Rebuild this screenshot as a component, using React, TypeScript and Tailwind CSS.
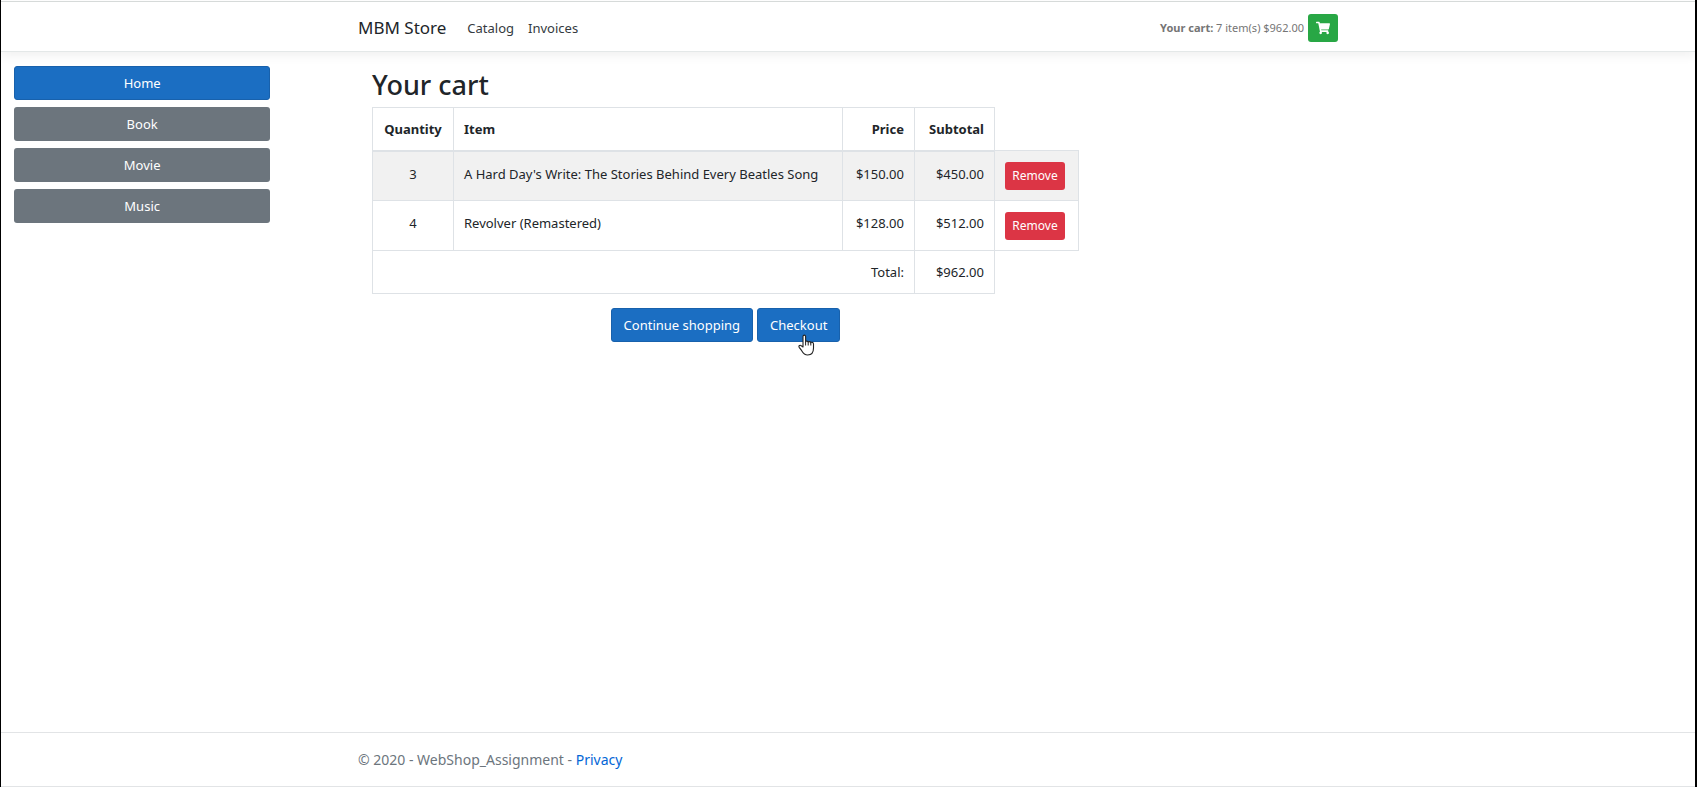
import React from "react";
import { FaShoppingCart } from "react-icons/fa";

const categories = ["Home", "Book", "Movie", "Music"];

const lines = [
  { quantity: 3, item: "A Hard Day's Write: The Stories Behind Every Beatles Song", price: "$150.00", subtotal: "$450.00" },
  { quantity: 4, item: "Revolver (Remastered)", price: "$128.00", subtotal: "$512.00" },
];

const cell = "border border-[#dee2e6] px-[10px]";
const primary = "h-[34px] rounded-[3px] border border-[#1861ac] bg-[#1b6ec2] px-3 text-white";

function Header() {
  return (
    <header className="border-t border-b border-t-[#d6dad9] border-b-[#e4e8e8] bg-white shadow-[0_4px_10px_rgba(0,0,0,0.06)]">
      <nav className="mx-auto flex h-[49px] max-w-[980px] items-center pt-[3px]">
        <a href="#store" className="text-[17px] text-[#212529]">MBM Store</a>
        <a href="#catalog" className="ml-[21px] text-[#343a40]">Catalog</a>
        <a href="#invoices" className="ml-[14px] text-[#343a40]">Invoices</a>
        <p className="ml-auto text-[11px] text-[#757575]">
          <b>Your cart:</b> 7 item(s) $962.00
        </p>
        <button aria-label="Open cart" className="ml-1 flex h-7 w-[30px] items-center justify-center rounded-[3px] bg-[#28a745] text-white">
          <FaShoppingCart size={14} />
        </button>
      </nav>
    </header>
  );
}

function Sidebar() {
  return (
    <aside className="flex w-1/6 shrink-0 flex-col gap-[7px] px-[13px]">
      {categories.map((name, i) => (
        <button
          key={name}
          className={
            i === 0
              ? "h-[34px] rounded-[3px] border border-[#1861ac] bg-[#1b6ec2] text-white"
              : "h-[34px] rounded-[3px] bg-[#6c757d] text-white"
          }
        >
          {name}
        </button>
      ))}
    </aside>
  );
}

function HandPointer() {
  return (
    <svg className="absolute top-[26px] left-[41px] h-[22px] w-[17px]" viewBox="0 0 17 22" aria-hidden="true">
      <path
        d="M5 13V2.5C5 .6 7.6.6 7.6 2.5V8c.1-1.3 2.5-1.2 2.6.3.3-1.1 2.5-.9 2.6.6.4-1 2.7-.8 2.7 1V14c0 4-2 7-5.8 7-3.2 0-4.5-1.6-6-4.3L1.2 13.3C.3 11.7 2.1 10.7 3.3 11.8Z"
        fill="#fff"
        stroke="#222"
        strokeWidth="1.1"
        strokeLinejoin="round"
      />
      <path d="M7.6 8v3.5M10.2 8.3v3.2M12.8 9v2.5" stroke="#222" fill="none" />
    </svg>
  );
}

function CartTable() {
  return (
    <table className="w-[707px] table-fixed border-collapse text-[#212529]">
      <colgroup>
        <col className="w-[81px]" />
        <col />
        <col className="w-[72px]" />
        <col className="w-[80px]" />
        <col className="w-[84px]" />
      </colgroup>
      <thead>
        <tr className="h-[43px]">
          <th className={`${cell} border-b-2 text-center`}>Quantity</th>
          <th className={`${cell} border-b-2 text-left`}>Item</th>
          <th className={`${cell} border-b-2 text-right`}>Price</th>
          <th className={`${cell} border-b-2 text-right`}>Subtotal</th>
          <td />
        </tr>
      </thead>
      <tbody>
        {lines.map((line) => (
          <tr key={line.item} className="h-[50px] align-top odd:bg-[#f1f1f1]">
            <td className={`${cell} pt-[11px] text-center`}>{line.quantity}</td>
            <td className={`${cell} pt-[11px] whitespace-nowrap`}>{line.item}</td>
            <td className={`${cell} pt-[11px] text-right`}>{line.price}</td>
            <td className={`${cell} pt-[11px] text-right`}>{line.subtotal}</td>
            <td className={`${cell} pt-[11px]`}>
              <button className="flex h-7 w-[60px] items-center justify-center rounded-[3px] bg-[#dc3545] text-[12px] text-white">
                Remove
              </button>
            </td>
          </tr>
        ))}
        <tr className="h-[43px]">
          <td colSpan={3} className={`${cell} text-right`}>Total:</td>
          <td className={`${cell} text-right`}>$962.00</td>
          <td />
        </tr>
      </tbody>
    </table>
  );
}

export default function App() {
  return (
    <div className="flex min-h-screen flex-col border-r-2 border-l border-black bg-white pt-px font-['Noto_Sans','Open_Sans',sans-serif] text-[13px] leading-[22px]">
      <Header />
      <div className="flex grow pt-[14px]">
        <Sidebar />
        <main className="w-2/3">
          <div className="mx-auto max-w-[980px] px-[14px]">
            <div className="w-fit">
              <h1 className="pt-px pb-[5px] text-[27px] leading-[35px] font-medium text-[#212529]">Your cart</h1>
              <CartTable />
              <div className="mt-[14px] flex justify-center gap-1">
                <button className={primary}>Continue shopping</button>
                <div className="relative">
                  <button className={primary}>Checkout</button>
                  <HandPointer />
                </div>
              </div>
            </div>
          </div>
        </main>
      </div>
      <footer className="border-t border-b border-[#e2e4e6]">
        <p className="mx-auto max-w-[980px] pt-4 pb-[15px] text-[14px] text-[#6c757d]">
          © 2020 - WebShop_Assignment - <a href="#privacy" className="text-[#0366d6]">Privacy</a>
        </p>
      </footer>
    </div>
  );
}
